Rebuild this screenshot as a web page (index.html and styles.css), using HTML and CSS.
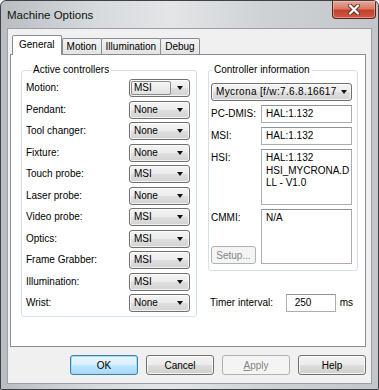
FILE: index.html
```html
<!DOCTYPE html>
<html>
<head>
<meta charset="utf-8">
<link rel="stylesheet" href="styles.css">
</head>
<body>
<div class="window">
  <div class="titlebar">
    <span class="title">Machine Options</span>
    <div class="close">
      <svg width="14" height="11" viewBox="0 0 14 11"><path d="M3 1.5 L11 9.5 M11 1.5 L3 9.5" stroke="#5a2a22" stroke-width="4" stroke-linecap="round"/><path d="M3 1.5 L11 9.5 M11 1.5 L3 9.5" stroke="#fff" stroke-width="2.4" stroke-linecap="round"/></svg>
    </div>
  </div>
  <div class="client">
    <div class="tabs">
      <div class="tab selected">General</div>
      <div class="tab">Motion</div>
      <div class="tab">Illumination</div>
      <div class="tab">Debug</div>
    </div>
    <div class="panel">
      <fieldset class="group left-group">
        <legend class="legend legend-left">Active controllers</legend>
        <div class="ctrl-grid">
          <span class="lbl">Motion:</span><div class="combo"><span class="combo-text focus">MSI</span><span class="arrow"></span></div>
          <span class="lbl">Pendant:</span><div class="combo"><span class="combo-text">None</span><span class="arrow"></span></div>
          <span class="lbl">Tool changer:</span><div class="combo"><span class="combo-text">None</span><span class="arrow"></span></div>
          <span class="lbl">Fixture:</span><div class="combo"><span class="combo-text">None</span><span class="arrow"></span></div>
          <span class="lbl">Touch probe:</span><div class="combo"><span class="combo-text">MSI</span><span class="arrow"></span></div>
          <span class="lbl">Laser probe:</span><div class="combo"><span class="combo-text">None</span><span class="arrow"></span></div>
          <span class="lbl">Video probe:</span><div class="combo"><span class="combo-text">MSI</span><span class="arrow"></span></div>
          <span class="lbl">Optics:</span><div class="combo"><span class="combo-text">MSI</span><span class="arrow"></span></div>
          <span class="lbl">Frame Grabber:</span><div class="combo"><span class="combo-text">MSI</span><span class="arrow"></span></div>
          <span class="lbl">Illumination:</span><div class="combo"><span class="combo-text">MSI</span><span class="arrow"></span></div>
          <span class="lbl">Wrist:</span><div class="combo"><span class="combo-text">None</span><span class="arrow"></span></div>
        </div>
      </fieldset>
      <div class="right-col">
        <fieldset class="group right-group">
          <legend class="legend legend-right">Controller information</legend>
          <div class="info-grid">
            <div class="combo wide"><span class="combo-text clip">Mycrona [f/w:7.6.8.16617</span><span class="arrow"></span></div>
            <span class="lbl top">PC-DMIS:</span><div class="field">HAL:1.132</div>
            <span class="lbl top">MSI:</span><div class="field">HAL:1.132</div>
            <span class="lbl top">HSI:</span><div class="field multi">HAL:1.132<br>HSI_MYCRONA.D<br>LL - V1.0</div>
            <div class="cmmi-cell"><span class="lbl top">CMMI:</span><div class="btn disabled small">Setup...</div></div><div class="field multi">N/A</div>
          </div>
        </fieldset>
        <div class="timer-row">
          <span class="lbl">Timer interval:</span>
          <div class="field timer">250</div>
          <span class="lbl">ms</span>
        </div>
      </div>
    </div>
    <div class="buttons">
      <div class="btn default">OK</div>
      <div class="btn">Cancel</div>
      <div class="btn disabled"><u>A</u>pply</div>
      <div class="btn">Help</div>
    </div>
  </div>
</div>
</body>
</html>
```

FILE: styles.css
```css
html, body {
  margin: 0;
  padding: 0;
  background: #ffffff;
}
body {
  font-family: "Liberation Sans", Arial, sans-serif;
  font-size: 10px;
  color: #000;
}
.window {
  width: 379px;
  height: 390px;
  box-sizing: border-box;
  border: 1px solid #3e4247;
  border-radius: 6px 6px 1px 1px;
  background: linear-gradient(to right, #b9bdc2 0%, #d7dadd 25%, #e3e5e7 45%, #cfd2d5 70%, #c2c6ca 100%);
  display: flex;
  flex-direction: column;
  padding: 0 6px 5px 6px;
  overflow: hidden;
}
.titlebar {
  height: 27px;
  flex: none;
  display: flex;
  justify-content: space-between;
  align-items: flex-start;
}
.title {
  font-size: 11.5px;
  line-height: 12px;
  margin-top: 8px;
  color: #111;
}
.close {
  width: 44px;
  height: 18px;
  margin-right: -4px;
  box-sizing: border-box;
  border: 1px solid #5c2219;
  border-top: none;
  border-radius: 0 0 4px 4px;
  background: linear-gradient(#e9a897 0%, #d77a66 45%, #c2402d 55%, #cf5a43 100%);
  display: flex;
  align-items: center;
  justify-content: center;
  box-shadow: inset 0 0 0 1px rgba(255,210,200,0.45);
}
.client {
  flex: 1;
  background: #f0f0f0;
  border: 1px solid #9aa0a6;
  display: flex;
  flex-direction: column;
  padding: 9px 5px 8px 2px;
}
.tabs {
  display: flex;
  align-items: flex-end;
  padding-left: 2px;
  height: 16px;
  flex: none;
  position: relative;
  z-index: 1;
}
.tab {
  height: 16px;
  box-sizing: border-box;
  border: 1px solid #898c95;
  border-bottom: none;
  margin-left: -1px;
  padding: 0 4px;
  line-height: 15px;
  background: linear-gradient(#f3f3f3, #e3e3e3);
  border-radius: 2px 2px 0 0;
}
.tab.selected {
  height: 20px;
  margin-left: 0;
  margin-bottom: -1px;
  padding: 0 6px;
  line-height: 18px;
  background: #fff;
}
.tab.selected + .tab {
  margin-left: 0;
}
.panel {
  flex: 1;
  background: #fff;
  border: 1px solid #898c95;
  display: grid;
  grid-template-columns: 176px 150px;
  column-gap: 11px;
  align-items: start;
  padding: 9px 0 0 10px;
}
.group {
  margin: 0;
  border: 1px solid #d5dfe5;
  border-radius: 3px;
  min-width: 0;
}
.legend {
  padding: 0 2px;
  line-height: 12px;
  font-size: 10px;
}
.legend-left {
  margin-left: 5px;
}
.legend-right {
  margin-left: 1px;
}
.left-group {
  padding: 3px 6px 4px 4px;
}
.ctrl-grid {
  display: grid;
  grid-template-columns: 1fr 61px;
  row-gap: 3.5px;
  align-items: center;
}
.lbl {
  white-space: nowrap;
  line-height: 12px;
}
.lbl.top {
  align-self: start;
  padding-top: 3px;
}
.combo {
  height: 18px;
  box-sizing: border-box;
  border: 1px solid #707070;
  border-radius: 3px;
  background: linear-gradient(#f4f4f4 0%, #ececec 48%, #dedede 52%, #d3d3d3 100%);
  display: flex;
  align-items: center;
  padding: 0 2px 0 1px;
  box-shadow: inset 0 0 0 1px rgba(255,255,255,0.7);
}
.combo-text {
  flex: 1;
  line-height: 14px;
  padding-left: 3px;
  white-space: nowrap;
}
.combo-text.focus {
  flex: 0 0 40px;
  box-sizing: border-box;
  height: 14px;
  border: 1px solid #8a8a8a;
  border-radius: 2px;
  line-height: 12px;
  padding-left: 2px;
  background: linear-gradient(#f6f6f6, #e2e2e2);
  margin-right: auto;
}
.combo-text.clip {
  letter-spacing: 0.35px;
}
.arrow {
  flex: none;
  width: 0;
  height: 0;
  border-left: 3.5px solid transparent;
  border-right: 3.5px solid transparent;
  border-top: 4px solid #111;
  margin: 0 4px 0 4px;
}
.right-col {
  display: flex;
  flex-direction: column;
}
.right-group {
  padding: 7px 5px 6px 2px;
}
.info-grid {
  display: grid;
  grid-template-columns: 1fr 91px;
  grid-template-rows: 18px 18px 18px 56px 55px;
  row-gap: 4px;
}
.combo.wide {
  grid-column: 1 / 3;
}
.field {
  box-sizing: border-box;
  border: 1px solid #abadb3;
  border-top-color: #8e9299;
  background: #fff;
  padding: 0 4px;
  line-height: 16px;
  white-space: nowrap;
}
.field.multi {
  line-height: 12.5px;
  padding-top: 2px;
}
.cmmi-cell {
  display: flex;
  flex-direction: column;
  justify-content: space-between;
  align-items: flex-start;
}
.timer-row {
  display: flex;
  align-items: center;
  margin-top: 23px;
  padding-left: 2px;
}
.field.timer {
  width: 50px;
  height: 18px;
  margin-left: auto;
  margin-right: 4px;
  padding-left: 8px;
}
.timer-row .lbl:last-child {
  margin-right: 5px;
}
.buttons {
  flex: none;
  display: flex;
  justify-content: flex-end;
  gap: 8px;
  margin-top: 8px;
  height: 20px;
}
.btn {
  width: 68px;
  height: 20px;
  box-sizing: border-box;
  border: 1px solid #707070;
  border-radius: 3px;
  background: linear-gradient(#f2f2f2 0%, #ebebeb 48%, #dddddd 52%, #cfcfcf 100%);
  box-shadow: inset 0 0 0 1px rgba(255,255,255,0.75);
  display: flex;
  align-items: center;
  justify-content: center;
}
.btn.default {
  border-color: #3c7fb1;
  background: linear-gradient(#eaf6fd 0%, #d9f0fc 48%, #bee6fd 52%, #a7d9f5 100%);
  box-shadow: inset 0 0 0 1px #a0d8f8;
}
.btn.disabled {
  border-color: #adb2b5;
  background: #f4f4f4;
  color: #838383;
  box-shadow: none;
}
.btn.small {
  width: 45px;
  height: 18px;
}
```
